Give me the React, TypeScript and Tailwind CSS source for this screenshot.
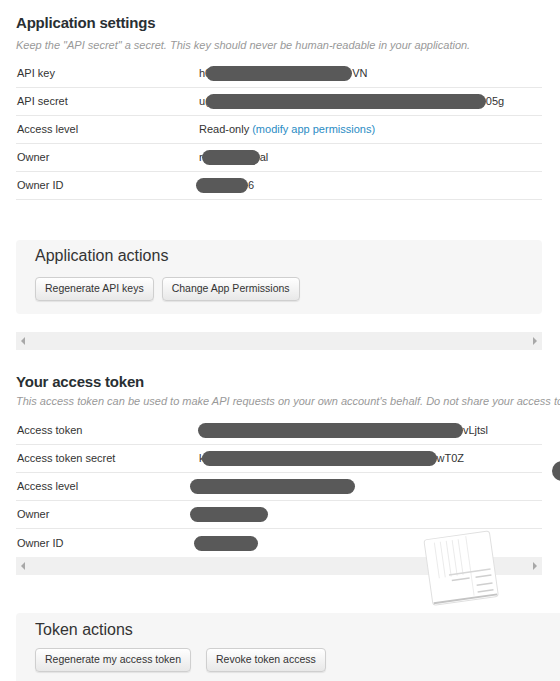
import type { ReactNode } from 'react'

type Row = { label: string; value: ReactNode }

// redaction marker drawn over a secret value
function Blot({ w, ml = 0 }: { w: number; ml?: number }) {
  return (
    <span
      className="inline-block h-[15px] rounded-full bg-[#595959] align-middle"
      style={{ width: w, marginLeft: ml }}
    />
  )
}

function InfoTable({ rows, last = true }: { rows: Row[]; last?: boolean }) {
  return (
    <div className="w-[526px]">
      {rows.map((r, i) => (
        <div
          key={r.label}
          className={
            'flex h-[28px] items-center ' +
            (i < rows.length - 1 || last ? 'border-b border-[#e8e8e8]' : '')
          }
        >
          <div className="w-[183px] pl-[1px]">{r.label}</div>
          <div className="flex items-center whitespace-nowrap">{r.value}</div>
        </div>
      ))}
    </div>
  )
}

function Btn({ children }: { children: ReactNode }) {
  return (
    <button className="h-[24px] rounded-[4px] border border-[#cfcfcf] bg-gradient-to-b from-white to-[#e8e8e8] px-[9px] text-[10.5px] text-[#333] shadow-[0_1px_1px_rgba(0,0,0,0.08)]">
      {children}
    </button>
  )
}

function ScrollBar() {
  return (
    <div className="flex h-[18px] w-[526px] items-center justify-between bg-[#f0f0f0] px-[5px]">
      <span className="h-0 w-0 border-y-[4px] border-r-[4px] border-y-transparent border-r-[#a8a8a8]" />
      <span className="h-0 w-0 border-y-[4px] border-l-[4px] border-y-transparent border-l-[#a8a8a8]" />
    </div>
  )
}

const appRows: Row[] = [
  {
    label: 'API key',
    value: (
      <>
        <span>h0</span>
        <Blot w={146} ml={-5} />
        <span>VN</span>
      </>
    ),
  },
  {
    label: 'API secret',
    value: (
      <>
        <span>u(</span>
        <Blot w={280} ml={-3} />
        <span>05g</span>
      </>
    ),
  },
  {
    label: 'Access level',
    value: (
      <>
        <span>Read-only&nbsp;</span>
        <a className="text-[#2a8cc4]">(modify app permissions)</a>
      </>
    ),
  },
  {
    label: 'Owner',
    value: (
      <>
        <span>r</span>
        <Blot w={58} ml={-1} />
        <span>al</span>
      </>
    ),
  },
  {
    label: 'Owner ID',
    value: (
      <>
        <Blot w={52} ml={-3} />
        <span>6</span>
      </>
    ),
  },
]

const tokenRows: Row[] = [
  {
    label: 'Access token',
    value: (
      <>
        <Blot w={265} ml={-1} />
        <span>vLjtsl</span>
      </>
    ),
  },
  {
    label: 'Access token secret',
    value: (
      <>
        <span>k</span>
        <Blot w={235} ml={-3} />
        <span>wT0Z</span>
      </>
    ),
  },
  { label: 'Access level', value: <Blot w={165} ml={-9} /> },
  { label: 'Owner', value: <Blot w={78} ml={-9} /> },
  { label: 'Owner ID', value: <Blot w={64} ml={-5} /> },
]

// tilted page graphic floating over the token table
function PageGlyph() {
  return (
    <svg width="84" height="80" viewBox="0 0 84 80" className="absolute left-[420px] top-[527px]">
      <g transform="rotate(-8 42 40)">
        <rect x="8" y="8" width="66" height="66" rx="3" fill="#fff" stroke="#e0e0e0" />
        <path d="M9 72 h64" stroke="#c4c4c4" strokeWidth="2" />
        {[18, 24, 30, 36, 42].map((x) => (
          <path key={x} d={`M${x} 12 V48`} stroke="#ebebeb" strokeWidth="1" />
        ))}
        <path d="M50 10 V70" stroke="#ececec" />
        <path d="M28 46 H70" stroke="#d6d6d6" strokeWidth="1.5" />
        <path d="M30 52 H48 M54 52 H70" stroke="#cfcfcf" strokeWidth="1.5" />
        <path d="M54 60 H70 M54 67 H70" stroke="#cfcfcf" strokeWidth="1.5" />
      </g>
    </svg>
  )
}

export default function App() {
  return (
    <div className="relative h-[681px] w-[560px] overflow-hidden bg-white font-['Liberation_Sans',Arial,sans-serif] text-[11px] text-[#333]">
      <div className="pl-4 pt-[13px]">
        <h2 className="text-[15px] font-bold leading-[20px] tracking-[-0.2px] text-[#292f33]">Application settings</h2>
        <p className="mt-[5px] whitespace-nowrap text-[11px] italic leading-[14px] text-[#999]">
          Keep the "API secret" a secret. This key should never be human-readable in your application.
        </p>
        <div className="mt-[8px]">
          <InfoTable rows={appRows} />
        </div>

        <div className="mt-[40px] w-[526px] rounded-[4px] bg-[#f6f6f6] px-[19px] pt-[6px] pb-[13px]">
          <h3 className="text-[16px] leading-[20px] text-[#333]">Application actions</h3>
          <div className="mt-[11px] flex gap-[8px]">
            <Btn>Regenerate API keys</Btn>
            <Btn>Change App Permissions</Btn>
          </div>
        </div>

        <div className="mt-[18px]">
          <ScrollBar />
        </div>

        <h2 className="mt-[22px] text-[15px] font-bold leading-[20px] tracking-[-0.2px] text-[#292f33]">Your access token</h2>
        <p className="mt-[2px] whitespace-nowrap text-[11px] italic leading-[14px] text-[#999]">
          This access token can be used to make API requests on your own account's behalf. Do not share your access token secret with anyone.
        </p>
        <div className="mt-[9px]">
          <InfoTable rows={tokenRows} last={false} />
        </div>
        <ScrollBar />

        <div className="mt-[38px] w-[600px] rounded-[4px] bg-[#f6f6f6] px-[19px] pt-[7px] pb-[13px]">
          <h3 className="text-[16px] leading-[20px] text-[#333]">Token actions</h3>
          <div className="mt-[8px] flex gap-[15px]">
            <Btn>Regenerate my access token</Btn>
            <Btn>Revoke token access</Btn>
          </div>
        </div>
      </div>

      <PageGlyph />
      <span className="absolute left-[552px] top-[461px] h-[20px] w-[20px] rounded-full bg-[#595959]" />
    </div>
  )
}
